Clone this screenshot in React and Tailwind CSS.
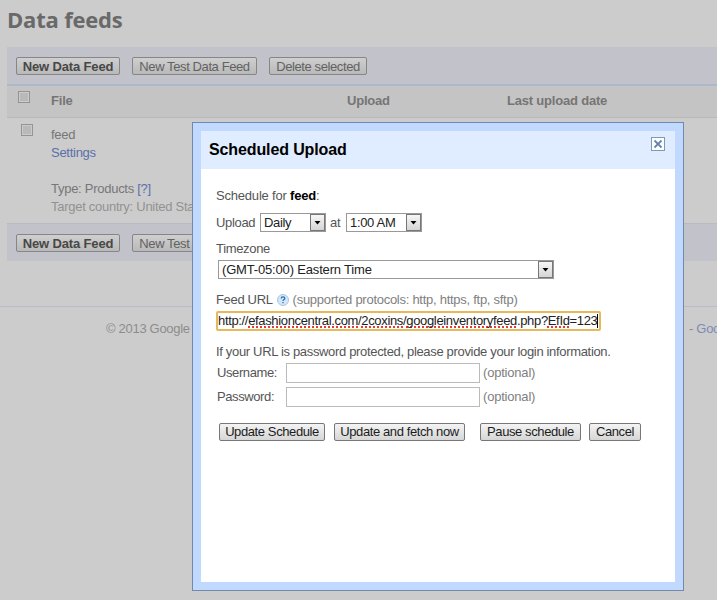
import clsx from "clsx";

function ToolbarButton({ children, bold, className }) {
  return (
    <button
      className={clsx(
        "h-[18px] shrink-0 rounded-[2px] border border-[#868686] bg-linear-to-b from-[#cfcfcf] to-[#b9b9b9] leading-[15px] whitespace-nowrap",
        bold ? "font-bold tracking-[-0.15px] text-[#474747]" : "tracking-[-0.4px] text-[#626262]",
        className
      )}
    >
      {children}
    </button>
  );
}

function Toolbar({ className, showDelete }) {
  return (
    <div className={clsx("flex bg-[#c1c2ca] pl-[9px]", className)}>
      <ToolbarButton bold className="w-[104px]">New Data Feed</ToolbarButton>
      <ToolbarButton className="ml-3 w-[125px]">New Test Data Feed</ToolbarButton>
      {showDelete && <ToolbarButton className="ml-3 w-[98px]">Delete selected</ToolbarButton>}
    </div>
  );
}

function Checkbox({ className }) {
  return (
    <span
      className={clsx(
        "block h-3 w-3 shrink-0 border border-[#949494] bg-[#b9b9b9] shadow-[inset_0_0_0_1px_#cbcbcb]",
        className
      )}
    />
  );
}

function Select({ value, className }) {
  return (
    <div
      className={clsx(
        "flex h-[19px] shrink-0 border border-[#999] bg-white pl-[3px] text-[#222]",
        className
      )}
    >
      <span className="flex-1 leading-[17px] whitespace-nowrap">{value}</span>
      <span className="flex w-[15px] items-center justify-center border border-[#777] bg-linear-to-b from-[#f6f6f6] to-[#d5d5d5]">
        <svg width="7" height="4" viewBox="0 0 7 4">
          <path d="M0.500 0h6L3.500 3.500z" fill="#000" />
        </svg>
      </span>
    </div>
  );
}

function DialogButton({ children, className }) {
  return (
    <button
      className={clsx(
        "h-[18px] shrink-0 rounded-[2px] border border-[#777] bg-linear-to-b from-[#f4f4f4] to-[#d6d6d6] leading-[16px] tracking-[-0.4px] whitespace-nowrap text-[#1c1c1c]",
        className
      )}
    >
      {children}
    </button>
  );
}

function LoginField({ label }) {
  return (
    <div className="flex h-6 pl-px">
      <label className="w-[69px] leading-[19px] tracking-[-0.4px]">{label}</label>
      <span className="h-5 w-[194px] border border-[#bbb] bg-white" />
      <span className="ml-[3px] leading-5 tracking-[-0.2px] text-[#808080]">(optional)</span>
    </div>
  );
}

function Misspelled({ children }) {
  return (
    <span className="underline decoration-[#e23b3b] decoration-dotted decoration-[1.5px] underline-offset-1 [text-decoration-skip-ink:none]">
      {children}
    </span>
  );
}

function HelpIcon() {
  return (
    <svg className="mt-[2px] ml-[4px]" width="12" height="12" viewBox="0 0 12 12">
      <circle cx="6" cy="6" r="5.5" fill="#d3e7f9" stroke="#a3c6e8" />
      <path
        d="M4.200 4.500C4.200 3.300 5 2.900 6 2.900s1.800.6 1.800 1.500C7.800 5.600 6 5.600 6 7M6 8v1.300"
        fill="none"
        stroke="#2f6fb5"
        strokeWidth="1.3"
      />
    </svg>
  );
}

function CloseIcon() {
  return (
    <svg width="14" height="14" viewBox="0 0 14 14">
      <rect x="0.5" y="0.5" width="13" height="13" fill="#fff" stroke="#7d98bb" />
      <path d="M3.500 3.500l7 7M10.500 3.500l-7 7" stroke="#6585ae" strokeWidth="1.8" />
    </svg>
  );
}

function UploadDialog() {
  return (
    <div className="absolute top-[122px] left-[192px] h-[469px] w-[492px] border border-[#7189ad] bg-[#c1d9ff] p-2">
      <div className="flex h-[451px] flex-col bg-white text-[#555]">
        <div className="flex h-[38px] items-start justify-between bg-[#e0ecff] pr-[10px] pl-2">
          <h2 className="pt-[9px] text-base leading-5 font-bold tracking-[-0.12px] text-black">
            Scheduled Upload
          </h2>
          <span className="pt-[6px]">
            <CloseIcon />
          </span>
        </div>
        <div className="pt-[19px] pl-[15px] leading-4 tracking-[-0.33px]">
          <p className="tracking-[-0.2px]">
            Schedule for <b className="text-black">feed</b>:
          </p>
          <div className="mt-[9px] flex leading-[19px]">
            <span className="w-11">Upload</span>
            <Select value="Daily" className="w-[66px]" />
            <span className="w-5 pl-1">at</span>
            <Select value="1:00 AM" className="w-[76px]" />
          </div>
          <p className="mt-[9px]">Timezone</p>
          <Select
            value="(GMT-05:00) Eastern Time"
            className="mt-[3px] ml-0.5 w-[336px] tracking-[-0.17px]"
          />
          <div className="mt-[13px] flex">
            <span>Feed URL</span>
            <HelpIcon />
            <span className="ml-1 tracking-[-0.27px] text-[#808080]">
              (supported protocols: http, https, ftp, sftp)
            </span>
          </div>
          <div className="mt-[3px] flex h-5 w-[385px] items-center rounded-[2px] border-2 border-[#e5b95c] bg-white text-[#222]">
            <span className="tracking-[-0.34px] whitespace-nowrap">
              http://<Misspelled>efashioncentral.com</Misspelled>/<Misspelled>2coxins</Misspelled>/
              <Misspelled>googleinventoryfeed</Misspelled>.php?<Misspelled>EfId</Misspelled>=123
            </span>
            <span className="h-[14px] w-px bg-black" />
          </div>
          <p className="mt-[13px] mb-[3px]">
            If your URL is password protected, please provide your login information.
          </p>
          <LoginField label="Username:" />
          <LoginField label="Password:" />
          <div className="mt-3 flex pl-[3px]">
            <DialogButton className="w-[106px]">Update Schedule</DialogButton>
            <DialogButton className="ml-[9px] w-[131px]">Update and fetch now</DialogButton>
            <DialogButton className="ml-[15px] w-[101px]">Pause schedule</DialogButton>
            <DialogButton className="ml-2 w-[52px]">Cancel</DialogButton>
          </div>
        </div>
      </div>
    </div>
  );
}

export default function App() {
  return (
    <div className="relative h-[600px] w-[717px] overflow-hidden bg-[#cccccc] font-['Liberation_Sans',Arial,sans-serif] text-[13px] text-[#777]">
      <h1 className="h-[47px] pt-[4px] pl-[7px] font-['Open_Sans',sans-serif] text-[22px] leading-[30px] font-bold tracking-[-0.2px] text-[#696969]">
        Data feeds
      </h1>

      <div className="ml-[7px]">
        <Toolbar showDelete className="h-[39px] border-b-2 border-[#abb9c9] pt-[10px]" />
        <div className="flex h-8 border-b border-[#b9b9b9] bg-[#c4c4c4] font-bold tracking-[-0.2px] text-[#757575]">
          <Checkbox className="mt-[5px] ml-[11px]" />
          <span className="ml-[21px] w-[296px] leading-[30px]">File</span>
          <span className="w-[160px] leading-[30px]">Upload</span>
          <span className="leading-[30px]">Last upload date</span>
        </div>
        <div className="flex h-[105px]">
          <Checkbox className="mt-[6px] ml-[14px]" />
          <div className="ml-[18px] pt-[8px] leading-[18px] tracking-[-0.27px] whitespace-nowrap">
            <p>feed</p>
            <p className="text-[#5a70ab]">Settings</p>
            <p className="mt-[18px]">
              Type: Products <span className="text-[#5a70ab]">[?]</span>
            </p>
            <p className="text-[#929292]">Target country: United States</p>
          </div>
        </div>
        <Toolbar className="h-[38px] border-t border-[#b9bbc2] pt-[10px]" />
      </div>

      <footer className="mt-[45px] flex border-t border-[#b8bcc9] pt-[14px] pl-[106px] leading-4 tracking-[-0.3px] whitespace-nowrap text-[#8c8c8c]">
        <span className="w-[583px] shrink-0">© 2013 Google</span>
        <span>
          - <span className="text-[#7d8bb5]">Google Home</span>
        </span>
      </footer>

      <UploadDialog />
    </div>
  );
}
